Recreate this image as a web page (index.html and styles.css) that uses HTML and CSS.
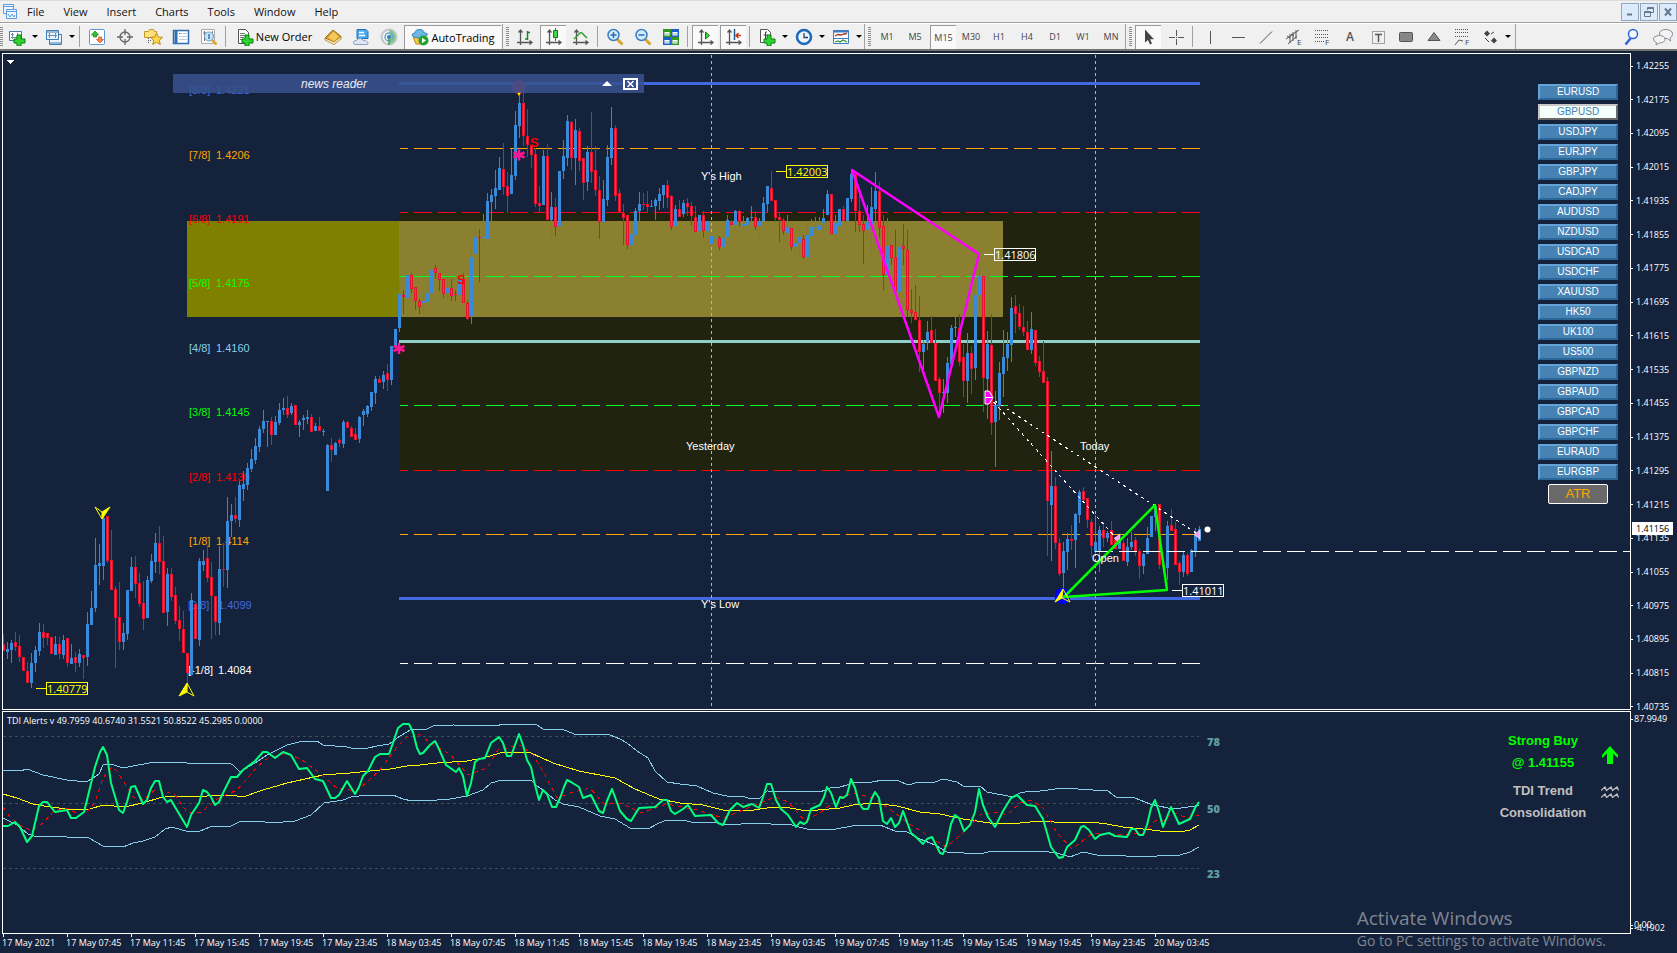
FILE: index.html
```html
<!doctype html>
<html lang="en">

<head>
    <meta charset="utf-8">
    <title>GBPUSD,M15</title>
    <link rel="stylesheet" href="styles.css">
</head>

<body>
    <nav class="menubar">
        <svg class="app-icon" width="16" height="16" viewBox="0 0 16 16" fill="#eef6ff" stroke="#5b9be0">
            <path d="M1.500 .5h10v9h-10z M1.500 2.500h10" />
            <path d="M4.500 5.500h10v9h-10z M4.500 7.500h10 M6 10l2 3 2-3 2 3 1-2" />
        </svg>
        <a href="#">File</a>
        <a href="#">View</a>
        <a href="#">Insert</a>
        <a href="#">Charts</a>
        <a href="#">Tools</a>
        <a href="#">Window</a>
        <a href="#">Help</a>
        <div class="window-buttons">
            <button aria-label="Minimize"><svg width="12" height="12"><path d="M3 8.500h5" stroke="#66788c" stroke-width="2" /></svg></button>
            <button aria-label="Restore"><svg width="12" height="12" fill="none" stroke="#66788c"><path d="M4.500 4V1.500h6v5H8 M4 2.500h7 M1.500 5.500h6v5h-6z M1 6.500h7" /></svg></button>
            <button aria-label="Close"><svg width="12" height="12"><path d="M3 2.500l6 7 M9 2.500l-6 7" stroke="#66788c" stroke-width="2" /></svg></button>
        </div>
    </nav>

    <div class="toolbar">
        <span class="grip first"></span>
        <button class="tool" aria-label="New chart">
            <svg width="18" height="18"><path d="M1.500 3.500h12v9h-12z" fill="#fff" stroke="#3f7fb5" /><path d="M4.500 5v6 M3 9.500h8 M9.500 5v5 M3 6.500h3" stroke="#6d8fa8" /><path d="M9 7h4v4h4v4h-4v3H9v-3H6v-4h3z" fill="#2fd52f" stroke="#0a7d12" /></svg>
        </button>
        <button class="drop" aria-label="New chart list"></button>
        <button class="tool" aria-label="Profiles">
            <svg width="18" height="18" fill="#e8f3fc" stroke="#3f7fb5"><path d="M4.500 6.500h12v10h-12z M4.500 15h12" /><path d="M1.500 2.500h12v9h-12z M1.500 4h12" /><path d="M4.500 5v5 M3 7.500h9 M10.500 5v5" stroke="#6d8fa8" /></svg>
        </button>
        <button class="drop" aria-label="Profiles list"></button>
        <span class="sep"></span>
        <button class="tool" aria-label="Market Watch">
            <svg width="18" height="18"><rect x="1.500" y="1.500" width="15" height="15" rx="1" fill="#fff" stroke="#5b9bd5" /><path d="M7 3l3.500 4H8.500v2h-3V7h-2z" fill="#2fc52f" stroke="#0a7d12" stroke-width=".7" /><path d="M12 15l-3.500-3.500h2V9h3v2.500h2z" fill="#ff8a50" stroke="#d0401a" stroke-width=".7" /></svg>
        </button>
        <button class="tool" aria-label="Data Window">
            <svg width="18" height="18" fill="none" stroke="#666" stroke-width="1.300"><circle cx="9" cy="9" r="5" /><path d="M9 1v6 M9 11v6 M1 9h6 M11 9h6" /></svg>
        </button>
        <button class="tool" aria-label="Navigator">
            <svg width="19" height="18"><path d="M.5 3.500h4l1-2h4l1 2h2v6H.5z" fill="#ffe07a" stroke="#c09a2a" /><path d="M4.500 10v6 M4 12.500h4" stroke="#555" stroke-dasharray="1 1" /><path d="M12.500 5l1.800 4 4.200.4-3.200 2.900 1 4.200-3.800-2.200-3.800 2.200 1-4.200-3.200-2.900 4.200-.4z" fill="#ffd84a" stroke="#b98a1d" /></svg>
        </button>
        <button class="tool" aria-label="Terminal">
            <svg width="18" height="18"><rect x="1.500" y="2.500" width="15" height="13" fill="#fff" stroke="#2f6fb0" stroke-width="1.500" /><path d="M4 3v12" stroke="#2f6fb0" stroke-width="3" /><path d="M7 5.500h8 M7 8.500h8 M7 11.500h8" stroke="#b9cfe6" /><path d="M7 5.500h1" stroke="red" /></svg>
        </button>
        <button class="tool" aria-label="Strategy Tester">
            <svg width="18" height="18"><path d="M1.500 1.500h13v14h-13z" fill="#fff" stroke="#aaa" /><path d="M4.500 3v10 M12.500 3v8 M3 5h3" stroke="#777" /><path d="M12 12l4.500 4.500" stroke="#e0a92d" stroke-width="2.500" /><circle cx="9" cy="8.500" r="4.500" fill="#bfe2fb" fill-opacity=".85" stroke="#6a9cc4" /><path d="M9 6v5" stroke="#5b8fc0" stroke-width="2" /></svg>
        </button>
        <span class="sep"></span>
        <button class="tool wide new-order">
            <svg width="18" height="18"><path d="M2.500 1.500h7l3 3v11h-10z" fill="#fff" stroke="#555" /><path d="M4 5.500h5 M4 7.500h6 M4 9.500h4 M4 11.500h3" stroke="#777" /><path d="M9 7h4v4h4v4h-4v3H9v-3H6v-4h3z" fill="#2fd52f" stroke="#0a7d12" /></svg>
            New Order
        </button>
        <button class="tool" aria-label="MetaEditor">
            <svg width="18" height="18"><path d="M1 10l8-8 8 6.500-7 7.500z" fill="#d99a1f" stroke="#9a6a10" /><path d="M4 9.500l5.500-6 5.500 5-5 5z" fill="#f3c75c" /><path d="M1 10l9 4 7-5.500v2.500l-7 5.500-9-4.500z" fill="#fff2c4" stroke="#9a6a10" stroke-width=".7" /></svg>
        </button>
        <button class="tool" aria-label="Hosting">
            <svg width="18" height="18"><path d="M5 1.500h9l2 2v7H5z" fill="#4aa8ee" stroke="#2070c0" /><path d="M7 4.500h5 M7 7.500h6" stroke="#fff" stroke-width="1.500" /><path d="M3 16.500q-2-.5-1.500-2.500 1-2 3-1.500 1-2.500 4-2 2 .3 2.500 2 2.500-1 3.500 1 2 .5 1.500 2.500l-1 .5z" fill="#dfe6f2" stroke="#8aa0c0" /></svg>
        </button>
        <button class="tool" aria-label="Signals">
            <svg width="18" height="18" fill="none"><circle cx="9" cy="9" r="7.500" stroke="#c3c8cc" stroke-width="2" /><path d="M9 1.500a7.500 7.500 0 0 1 1 14.800V9z" fill="#86c88a" /><circle cx="9" cy="9" r="4" stroke="#6fa7cf" stroke-width="1.500" /><circle cx="9" cy="9" r="2" fill="#2f80c0" /><path d="M9 10v7" stroke="#3c9a46" stroke-width="1.500" /></svg>
        </button>
        <button class="tool wide auto pressed">
            <svg width="18" height="18"><path d="M2 9h13l-4 7H5z" fill="#f6c945" stroke="#b58a18" /><path d="M1 7.500q0-2.500 3-2.500 0-3.500 4.500-3.500T13 5q3.500-.5 3.500 2-3 3-8 3t-7.500-2.500z" fill="#6bb7e4" stroke="#3a86ba" /><circle cx="12.500" cy="12.500" r="5" fill="#1fa32a" /><path d="M11 9.800v5.400l4-2.700z" fill="#fff" /></svg>
            AutoTrading
        </button>

        <span class="grip"></span>
        <button class="tool" aria-label="Bar chart">
            <svg width="18" height="18" fill="none"><path class="axes" d="M4.500 2v15 M1 14.500h15 M2.500 4.500l2-2.500 2 2.500 M13.500 12.500l2.500 2-2.500 2" /><path d="M11.500 3v9 M11.500 4.500h2.500 M9 11h2.500" stroke="#178a22" stroke-width="1.500" /></svg>
        </button>
        <button class="tool pressed" aria-label="Candlesticks">
            <svg width="18" height="18" fill="none"><path class="axes" d="M4.500 2v15 M1 14.500h15 M2.500 4.500l2-2.500 2 2.500 M13.500 12.500l2.500 2-2.500 2" /><path d="M10.500 0v13" stroke="#178a22" /><path d="M8.500 2.500h4v7h-4z" fill="#3fd84a" stroke="#0a7d12" /></svg>
        </button>
        <button class="tool" aria-label="Line chart">
            <svg width="18" height="18" fill="none"><path class="axes" d="M4.500 2v15 M1 14.500h15 M2.500 4.500l2-2.500 2 2.500 M13.500 12.500l2.500 2-2.500 2" /><path d="M2 11l6-6q2-1 3 1l4 4" stroke="#2fa03a" stroke-width="1.500" /></svg>
        </button>
        <span class="sep"></span>
        <button class="tool" aria-label="Zoom in">
            <svg width="18" height="18"><path d="M11 11l5.500 5.500" stroke="#d7a62a" stroke-width="3" /><circle cx="7.500" cy="7" r="5.500" fill="#d3ecfd" stroke="#3b7fc4" stroke-width="1.500" /><path d="M4.500 7h6 M7.500 4v6" stroke="#2a68b0" stroke-width="1.500" /></svg>
        </button>
        <button class="tool" aria-label="Zoom out">
            <svg width="18" height="18"><path d="M11 11l5.500 5.500" stroke="#d7a62a" stroke-width="3" /><circle cx="7.500" cy="7" r="5.500" fill="#d3ecfd" stroke="#3b7fc4" stroke-width="1.500" /><path d="M4.500 7h6" stroke="#2a68b0" stroke-width="1.500" /></svg>
        </button>
        <button class="tool" aria-label="Tile windows">
            <svg width="18" height="18"><path fill="#2f9a1f" d="M1 1h8v8H1z M9 9h8v8H9z" /><path fill="#1d5fc8" d="M9 1h8v8H9z M1 9h8v8H1z" /><path fill="#fff" d="M2.500 4h5v3.500h-5z M10.500 4h5v3.500h-5z M2.500 12h5v3.500h-5z M10.500 12h5v3.500h-5z" /><path d="M3 6h4 M11 6h4 M3 14h4 M11 14h4" stroke="#9ab" /></svg>
        </button>
        <span class="sep"></span>
        <button class="tool pressed" aria-label="Auto scroll">
            <svg width="18" height="18" fill="none"><path class="axes" d="M4.500 2v15 M1 14.500h15 M2.500 4.500l2-2.500 2 2.500 M13.500 12.500l2.500 2-2.500 2" /><path d="M8.500 4v7l4-3.500z" fill="#3fd84a" stroke="#0a7d12" /></svg>
        </button>
        <button class="tool pressed" aria-label="Chart shift">
            <svg width="18" height="18" fill="none"><path class="axes" d="M4.500 2v15 M1 14.500h15 M2.500 4.500l2-2.500 2 2.500 M13.500 12.500l2.500 2-2.500 2" /><path d="M9.500 1v11" stroke="#1d5a90" stroke-width="1.500" /><path d="M11 7.500h5 M13.500 5l-2.500 2.500 2.500 2.500" stroke="#c23a12" stroke-width="1.500" /></svg>
        </button>
        <span class="sep"></span>
        <button class="tool" aria-label="Indicators">
            <svg width="18" height="18"><path d="M2.500 1.500h7l3 3v10h-10z" fill="#fff" stroke="#555" /><path d="M9 4H7.500v8H6 M5.500 7h4" fill="none" stroke="#444" /><path d="M9 7h4v4h4v4h-4v3H9v-3H6v-4h3z" fill="#2fd52f" stroke="#0a7d12" /></svg>
        </button>
        <button class="drop" aria-label="Indicators list"></button>
        <button class="tool" aria-label="Periods">
            <svg width="18" height="18"><circle cx="9" cy="9" r="7" fill="#eaf5ff" stroke="#1c68b8" stroke-width="2.500" /><path d="M9 5v4.500h4" fill="none" stroke="#345" stroke-width="1.300" /></svg>
        </button>
        <button class="drop" aria-label="Periods list"></button>
        <button class="tool" aria-label="Templates">
            <svg width="18" height="18" fill="none"><path d="M1.500 2.500h15v13h-15z" fill="#fff" stroke="#3f7fc0" /><path d="M1 3.500h16" stroke="#3f7fc0" stroke-width="2" /><path d="M1 10.500h16" stroke="#3f7fc0" /><path d="M3 8l3-1.500 3 .5 3-1 3-.5" stroke="#a03020" stroke-width="1.300" /><path d="M3 14l3-1 2 1 3-2 4 2" stroke="#2f9a3a" stroke-width="1.300" /></svg>
        </button>
        <button class="drop" aria-label="Templates list"></button>

        <span class="grip"></span>
        <button class="tool">M1</button>
        <button class="tool">M5</button>
        <button class="tool pressed">M15</button>
        <button class="tool">M30</button>
        <button class="tool">H1</button>
        <button class="tool">H4</button>
        <button class="tool">D1</button>
        <button class="tool">W1</button>
        <button class="tool">MN</button>

        <span class="grip"></span>
        <button class="tool pressed" aria-label="Cursor">
            <svg width="18" height="18"><path d="M5 1.500v13l3-2.500 2 4.500 2-1-2-4.300h4z" fill="#444" /></svg>
        </button>
        <button class="tool" aria-label="Crosshair">
            <svg width="18" height="18" class="glyph"><path d="M9.500 2v6 M9.500 11v6 M2 9.500h6 M11 9.500h6 M9 9.500h1" /></svg>
        </button>
        <span class="sep"></span>
        <button class="tool" aria-label="Vertical line">
            <svg width="18" height="18" class="glyph"><path d="M9.500 3v13" /></svg>
        </button>
        <button class="tool" aria-label="Horizontal line">
            <svg width="18" height="18" class="glyph"><path d="M3 9.500h13" /></svg>
        </button>
        <button class="tool" aria-label="Trendline">
            <svg width="18" height="18" class="glyph"><path d="M3 15.500l12-12" /></svg>
        </button>
        <button class="tool" aria-label="Equidistant channel">
            <svg width="18" height="18" class="glyph"><path d="M1 11l13-9 M3 16l9-8 M5 6v9 M8 4v9 M11 2v9 M2 8l3 2 M6 6l3 2" /><text x="12" y="17">E</text></svg>
        </button>
        <button class="tool" aria-label="Fibonacci retracement">
            <svg width="18" height="18" class="glyph"><path stroke-dasharray="1 1" d="M2 2.500h14 M2 6.500h14 M2 9.500h14 M2 13.500h9" /><text x="12" y="17">F</text></svg>
        </button>
        <button class="tool letter">A</button>
        <button class="tool" aria-label="Text label">
            <svg width="18" height="18" class="glyph"><path stroke-dasharray="1 1" d="M3.500 3.500h12v12h-12z" /><path d="M6 6.500h7 M9.500 6v8" stroke-width="1.500" /></svg>
        </button>
        <button class="tool" aria-label="Rectangle">
            <svg width="18" height="18" class="glyph"><rect x="2.500" y="4.500" width="13" height="9" rx="1" fill="#888" /></svg>
        </button>
        <button class="tool" aria-label="Triangle">
            <svg width="18" height="18" class="glyph"><path d="M9 4.500l6 8H3z" fill="#888" /></svg>
        </button>
        <button class="tool" aria-label="Fibonacci expansion">
            <svg width="18" height="18" class="glyph"><path stroke-dasharray="1 1" d="M2 1.500h14 M2 4.500h14 M2 8.500h14" /><path d="M2 17l4-5 4 1" /><text x="12" y="17">F</text></svg>
        </button>
        <button class="tool" aria-label="Arrows">
            <svg width="18" height="18"><path d="M6 2.500l3 3-3 3-3-3z M13 9.500l3 3-3 3-3-3z" fill="#444" /><path d="M4 10l4 4 M10 6l3-2" stroke="#444" fill="none" /></svg>
        </button>
        <button class="drop" aria-label="Arrows list"></button>
        <span class="end"></span>

        <div class="toolbar-right">
            <button class="tool" aria-label="Search">
                <svg width="18" height="18" fill="none" stroke="#2d62d8"><path d="M7.500 10.500l-5 6" stroke-width="2.500" /><circle cx="10" cy="6" r="4.500" stroke-width="1.500" fill="#f6faff" /></svg>
            </button>
            <button class="tool" aria-label="Chat">
                <svg width="22" height="18" fill="#f4f4f6" stroke="#8c8c94"><path d="M14 1.500q6.500.5 6.500 4.500 0 3-2.500 4l.5 3-3-2.500q-8 0-8-4.500 0-4.500 6.500-4.500z" /><path d="M7.500 7.500q5.500.3 5.500 3.700T7.500 15l-3.500 2 .5-2.500q-3-.7-3-3.500t6-3.500z" /></svg>
            </button>
        </div>
    </div>

    <main class="workspace">
        <section class="plot price-plot">
            <svg class="canvas" shape-rendering="crispEdges">
                <g transform="translate(-3 -54)">
                    <!-- zones -->
                    <rect x="399" y="212" width="801" height="258" fill="#1f230f" />
                    <rect x="187" y="221" width="212" height="96" fill="#808000" />
                    <rect x="399" y="221" width="604" height="96" fill="#8b8030" />

                    <!-- murrey levels -->
                    <g class="solid">
                        <path d="M399 83.500H1200" stroke="#4169e1" />
                        <path d="M399 341.500H1200" stroke="#8fcfc9" />
                        <path d="M399 598.500H1200" stroke="#4169e1" />
                    </g>
                    <g class="dashed">
                        <path d="M400 148.500H1200" stroke="#ffa500" />
                        <path d="M400 212.500H1200" stroke="#ff0022" />
                        <path d="M400 276.500H1200" stroke="#00ff22" />
                        <path d="M400 405.500H1200" stroke="#00ff22" />
                        <path d="M400 470.500H1200" stroke="#ff0000" />
                        <path d="M400 534.500H1200" stroke="#ffa500" />
                        <path d="M400 663.500H1200" stroke="#ffffff" />
                    </g>
                    <g class="level-text">
                        <text x="189" y="94" fill="#4169e1">[8/8]</text><text x="216" y="94" fill="#4169e1">1.4221</text>
                        <text x="189" y="159" fill="#ffa500">[7/8]</text><text x="216" y="159" fill="#ffa500">1.4206</text>
                        <text x="189" y="223" fill="#ff0000">[6/8]</text><text x="216" y="223" fill="#ff0000">1.4191</text>
                        <text x="189" y="287" fill="#00ff00">[5/8]</text><text x="216" y="287" fill="#00ff00">1.4175</text>
                        <text x="189" y="352" fill="#87ceeb">[4/8]</text><text x="216" y="352" fill="#87ceeb">1.4160</text>
                        <text x="189" y="416" fill="#00ff00">[3/8]</text><text x="216" y="416" fill="#00ff00">1.4145</text>
                        <text x="189" y="481" fill="#ff0000">[2/8]</text><text x="216" y="481" fill="#ff0000">1.4130</text>
                        <text x="189" y="545" fill="#ffa500">[1/8]</text><text x="216" y="545" fill="#ffa500">1.4114</text>
                        <text x="188" y="609" fill="#4169e1">[0/8]</text><text x="218" y="609" fill="#4169e1">1.4099</text>
                        <text x="188" y="674" fill="#ffffff">[-1/8]</text><text x="218" y="674" fill="#ffffff">1.4084</text>
                    </g>

                    <!-- day separators -->
                    <path class="day" d="M711.500 55V709 M1095.500 55V709" />

                    <g id="candles"></g>

                    <path d="M1095 551.500H1632" stroke="#fff" stroke-dasharray="18 6" />

                    <!-- closed trades -->
                    <path class="trade" d="M989 397L1116 538 M989 397L1196 533" />
                    <g shape-rendering="auto">
                        <path class="pattern" d="M852 170L979 254 939 417z" stroke="#ff00ff" />
                        <path d="M985 391h4l4 6.500-4 6.500h-4z" fill="#ff00ff" stroke="#fff" />
                        <path d="M985 397.500h7" stroke="#fff" />
                        <path d="M1120 534v9l-6-4.500z M1200 530v9l-6-4.500z" fill="#ff9df5" stroke="#fff" stroke-width=".5" />
                        <circle cx="1207.500" cy="529.500" r="3" fill="#fff" />
                        <circle cx="1062.500" cy="596" r="8" fill="#0000ff" />
                        <path class="pattern" d="M1064 597L1155 505 1167 590z" stroke="#00ff00" />
                        <g class="arrow">
                            <path d="M1063 589l-8 13 7-4z" fill="#ff0" /><path d="M1063 589l7 13-8-4" />
                            <path d="M187 683l-8 13 8-4z" fill="#ff0" /><path d="M187 683l7 13-7-4" />
                            <path d="M102 519l8-12-8 5z" fill="#ff0" /><path d="M102 519l-7-12 7 5" />
                        </g>
                        <circle cx="519" cy="87" r="7" fill="#c0204a" />
                        <path d="M515 91h8l-4 5z" fill="#f00" />
                        <path d="M517 92h4l-2 4z" fill="#ff0" />
                        <path class="star" d="M399 343v11 M393.500 346l11 5 M404.500 346l-11 5" />
                        <path class="star" d="M519 149.500v11 M513.500 152.500l11 5 M524.500 152.500l-11 5" />
                    </g>
                    <text class="sell" x="530" y="147">S</text>
                    <text class="sell" x="457" y="284">S</text>

                    <g class="chart-text">
                        <text x="701" y="180">Y's High</text>
                        <text x="686" y="450">Yesterday</text>
                        <text x="1080" y="450">Today</text>
                        <text x="1092" y="562">Open</text>
                        <text x="701" y="608">Y's Low</text>
                    </g>

                    <!-- price tags -->
                    <g class="tag yellow">
                        <path d="M36 688.500h10 M46.500 682.500h41v12h-41z" /><text x="47" y="693">1.40779</text>
                        <path d="M776 171.500h10 M786.500 165.500h41v12h-41z" /><text x="787" y="176">1.42003</text>
                    </g>
                    <g class="tag">
                        <path d="M984 254.500h10 M994.500 248.500h41v12h-41z" /><text x="995" y="259">1.41806</text>
                        <path d="M1172 590.500h10 M1182.500 584.500h41v12h-41z" /><text x="1183" y="595">1.41011</text>
                    </g>
                    <path d="M6 60h8l-4 4z" fill="#fff" />
                </g>
            </svg>

            <div class="news-reader">
                <span class="news-title">news reader</span>
                <button aria-label="Collapse"><svg width="10" height="5"><path d="M0 5l5-5 5 5z" fill="#fff" /></svg></button>
                <button aria-label="Close"><svg width="15" height="12" fill="none" stroke="#fff"><path d="M1 1h13v10H1z" stroke-width="2" /><path d="M4.500 3l6 6 M10.500 3l-6 6" stroke-width="1.500" /></svg></button>
            </div>

            <div class="symbols">
                <button>EURUSD</button>
                <button class="active">GBPUSD</button>
                <button>USDJPY</button>
                <button>EURJPY</button>
                <button>GBPJPY</button>
                <button>CADJPY</button>
                <button>AUDUSD</button>
                <button>NZDUSD</button>
                <button>USDCAD</button>
                <button>USDCHF</button>
                <button>XAUUSD</button>
                <button>HK50</button>
                <button>UK100</button>
                <button>US500</button>
                <button>GBPNZD</button>
                <button>GBPAUD</button>
                <button>GBPCAD</button>
                <button>GBPCHF</button>
                <button>EURAUD</button>
                <button>EURGBP</button>
                <button class="atr">ATR</button>
            </div>
        </section>

        <div class="axis price-axis">
            <span>1.42255</span>
            <span>1.42175</span>
            <span>1.42095</span>
            <span>1.42015</span>
            <span>1.41935</span>
            <span>1.41855</span>
            <span>1.41775</span>
            <span>1.41695</span>
            <span>1.41615</span>
            <span>1.41535</span>
            <span>1.41455</span>
            <span>1.41375</span>
            <span>1.41295</span>
            <span>1.41215</span>
            <span>1.41135</span>
            <span>1.41055</span>
            <span>1.40975</span>
            <span>1.40895</span>
            <span>1.40815</span>
            <span>1.40735</span>
            <b class="bid">1.41156</b>
        </div>

        <section class="plot tdi-plot">
            <svg class="canvas" shape-rendering="crispEdges" fill="none">
                <g transform="translate(-3 -712)">
                    <path d="M3 736.500H1199 M3 803.500H1199 M3 868.500H1199" stroke="#38534f" stroke-dasharray="3 3" />
                    <polyline class="band" points="3,770 20,771 27,769 43,775 67,780 86,782 93,778 99,774 103,765 111,764 123,768 133,766 155,762 187,763 229,763 233,765 240,772 255,763 267,755 287,745 303,741 317,741 323,745 347,747 351,748 368,748 377,746 389,744 400,736 412,729 427,729 433,726 453,725 497,726 502,724 528,724 537,725 543,729 562,729 574,734 610,735 620,739 627,743 637,751 648,758 655,771 667,782 680,784 697,786 713,793 727,796 742,796 748,798 760,798 767,791 820,792 830,788 840,787 847,785 853,782 872,782 883,780 899,781 908,785 919,782 935,782 943,779 957,782 963,786 975,787 980,786 987,792 1013,797 1020,793 1030,791 1040,791 1063,788 1108,791 1116,797 1135,798 1150,804 1159,806 1168,808 1181,808 1195,806 1199,805" />
                    <polyline class="band" points="3,818 17,825 28,834 34,836 67,837 89,838 103,846 123,847 133,843 143,841 155,837 165,829 172,827 189,832 200,831 210,827 231,826 239,822 259,821 271,823 295,821 311,815 324,803 337,801 343,800 351,797 367,795 393,795 403,799 412,801 437,800 450,799 467,796 483,790 491,783 502,780 531,780 537,786 543,790 555,800 563,804 579,807 600,816 615,819 630,828 648,829 659,823 667,820 687,821 695,823 715,822 723,825 760,823 771,824 788,824 807,829 830,830 847,827 858,825 880,825 895,831 907,832 920,839 935,845 947,852 980,854 988,852 1011,851 1040,851 1057,853 1070,857 1083,852 1097,855 1115,855 1137,857 1157,856 1180,855 1190,852 1199,847" />
                    <polyline class="base" points="3,794 17,798 33,804 50,807 67,809 87,810 103,805 124,807 143,803 159,798 171,796 187,797 207,796 230,795 243,797 263,790 287,783 323,775 350,773 370,771 390,769 407,766 420,765 437,763 467,761 483,758 500,753 518,752 531,753 553,763 579,771 615,778 635,789 659,799 680,803 703,805 723,810 748,811 773,807 790,808 807,811 840,808 853,805 873,803 897,806 920,812 940,814 963,819 990,823 1010,824 1040,821 1067,823 1090,822 1107,824 1123,827 1143,829 1160,831 1180,832 1190,830 1199,825" />
                    <polyline class="signal" points="3,807 10,817 20,825 32,831 43,823 55,810 67,808 80,815 87,812 95,802 103,778 112,767 117,771 127,787 133,797 143,800 156,789 167,792 175,795 187,812 200,813 217,799 237,790 257,767 268,758 287,753 302,760 317,771 337,788 357,791 380,770 397,747 412,732 420,735 433,745 450,754 468,775 487,768 498,750 520,745 533,755 545,775 557,798 570,793 590,788 603,803 620,803 642,813 667,804 697,810 723,818 753,806 775,797 788,802 805,821 820,813 840,797 853,793 873,798 887,807 908,823 930,837 946,847 963,833 980,815 997,812 1007,815 1020,803 1032,800 1043,808 1057,833 1072,849 1093,833 1120,835 1145,833 1155,821 1165,820 1173,812 1187,818 1199,815" />
                    <polyline class="rsi" points="3,826 8,826 15,822 20,827 27,842 32,836 39,806 43,802 47,802 55,812 67,810 71,818 76,818 84,812 87,800 95,767 100,752 103,747 107,755 111,783 119,810 123,813 127,802 131,787 135,786 139,795 143,804 147,800 151,788 155,781 159,781 163,797 167,802 171,800 175,807 187,827 191,815 199,803 203,790 207,792 211,797 215,805 219,802 223,793 231,777 237,777 243,770 255,761 263,752 267,752 275,758 283,752 291,755 299,769 307,768 315,779 323,781 331,798 335,798 339,795 347,781 355,794 359,787 363,776 368,771 375,757 380,754 389,754 393,743 398,728 403,724 409,724 413,732 417,748 420,754 423,753 430,745 435,741 439,749 446,765 456,772 459,768 463,776 467,796 471,783 475,762 479,759 485,758 491,743 499,737 503,743 507,756 511,756 515,745 519,734 523,745 527,760 531,767 535,785 539,800 543,790 547,794 552,807 556,807 560,798 564,787 567,780 571,782 579,787 583,798 591,795 599,811 603,813 607,801 612,789 615,797 620,811 627,819 631,821 639,808 655,807 663,800 667,800 671,811 675,814 683,809 688,805 695,816 711,815 718,823 723,825 730,810 737,803 743,807 752,804 759,808 763,797 767,784 771,784 776,800 781,809 788,815 796,827 800,822 804,824 807,822 811,809 820,805 824,797 827,787 831,793 836,807 840,797 843,798 847,795 851,779 855,788 859,803 863,809 868,809 872,798 875,792 879,798 883,821 887,824 891,818 895,827 899,823 903,811 911,833 916,837 923,844 927,839 932,837 937,847 940,853 943,854 947,843 951,824 955,815 959,818 964,831 970,825 975,812 979,789 983,805 988,817 995,827 1003,811 1011,798 1017,795 1027,805 1035,806 1043,819 1047,833 1051,847 1059,858 1063,857 1067,847 1075,840 1081,827 1084,826 1089,830 1095,839 1100,835 1109,833 1115,836 1127,837 1131,829 1135,829 1139,835 1143,835 1147,825 1151,808 1155,800 1159,812 1163,827 1167,817 1171,807 1179,824 1190,819 1195,808 1199,802" />
                    <g class="level-value">
                        <text x="1207" y="746">78</text>
                        <text x="1207" y="813">50</text>
                        <text x="1207" y="878">23</text>
                    </g>
                </g>
            </svg>
            <p class="tdi-title">TDI Alerts v 49.7959 40.6740 31.5521 50.8522 45.2985 0.0000</p>
            <div class="tdi-status">
                <div class="buy">Strong Buy<br>@ 1.41155</div>
                <svg class="up" width="16" height="18"><path d="M8 0l8 9v3l-5-4.500V18H5V7.500L0 12V9z" fill="#0f0" /></svg>
                <div class="trend">TDI Trend<br>Consolidation</div>
                <svg class="waves" width="18" height="12" fill="none" stroke="#c0c0c0" stroke-width="1.300"><path d="M0 4.500l4-3.500 1.500 3.500L10 1l1.500 3.500L16 1l1.500 3.500 M0 11.500L4 8l1.500 3.500L10 8l1.500 3.500L16 8l1.500 3.500" /></svg>
            </div>
        </section>

        <div class="axis tdi-axis">
            <span>87.9949</span>
            <span class="zero">0.00</span>
            <span class="min">-4.1902</span>
        </div>

        <div class="time-axis">
            <span>17 May 2021</span>
            <span>17 May 07:45</span>
            <span>17 May 11:45</span>
            <span>17 May 15:45</span>
            <span>17 May 19:45</span>
            <span>17 May 23:45</span>
            <span>18 May 03:45</span>
            <span>18 May 07:45</span>
            <span>18 May 11:45</span>
            <span>18 May 15:45</span>
            <span>18 May 19:45</span>
            <span>18 May 23:45</span>
            <span>19 May 03:45</span>
            <span>19 May 07:45</span>
            <span>19 May 11:45</span>
            <span>19 May 15:45</span>
            <span>19 May 19:45</span>
            <span>19 May 23:45</span>
            <span>20 May 03:45</span>
        </div>

        <div class="activate">
            <p class="activate-title">Activate Windows</p>
            <p>Go to PC settings to activate Windows.</p>
        </div>
    </main>

    <script src="candles.js"></script>
</body>

</html>
```

FILE: styles.css
```css
* {
    box-sizing: border-box;
}

body {
    margin: 0;
    height: 100vh;
    display: flex;
    flex-direction: column;
    overflow: hidden;
    background: #15223b;
    font-family: "Open Sans", "Noto Sans", sans-serif;
    font-size: 11px;
    color: #000;
}

button {
    font: inherit;
    color: inherit;
    padding: 0;
    margin: 0;
    border: 0;
    background: none;
}

p {
    margin: 0;
}

/* menu */
.menubar {
    display: flex;
    align-items: center;
    height: 23px;
    padding-left: 2px;
    background: #f0f0f0;
    border-top: 1px solid #dcdcdc;
    border-bottom: 1px solid #a0a0a0;
}

.menubar a {
    padding: 0 9px 0 10px;
    line-height: 20px;
    color: #111;
    text-decoration: none;
}

.app-icon {
    margin-right: -1px;
}

.window-buttons {
    display: flex;
    gap: 1px;
    margin-left: auto;
}

.window-buttons button {
    display: flex;
    align-items: center;
    justify-content: center;
    width: 18px;
    height: 18px;
    background: #dcebfb;
    border: 1px solid #94a6bb;
}

/* toolbar */
.toolbar {
    display: flex;
    align-items: center;
    height: 28px;
    background: #f0f0f0;
    border-top: 1px solid #fff;
    border-bottom: 2px solid #73736f;
}

.tool {
    display: flex;
    align-items: center;
    justify-content: center;
    flex: none;
    width: 26px;
    height: 24px;
    margin: 0 1px;
    font-size: 9px;
    color: #444;
}

.pressed {
    background: #f9f9f9;
    border-top: 1px solid #999;
    border-left: 1px solid #999;
}

.wide {
    gap: 2px;
    font-size: 11px;
    color: #000;
}

.new-order {
    width: 88px;
}

.auto {
    width: 97px;
}

.letter {
    font-size: 12px;
    font-weight: 600;
    color: #555;
}

.drop {
    display: flex;
    align-items: center;
    flex: none;
    width: 9px;
    height: 24px;
}

.drop::before {
    content: "";
    width: 0;
    margin-left: 1px;
    border: 3px solid transparent;
    border-top-color: #000;
    border-bottom: 0;
}

.sep {
    flex: none;
    width: 1px;
    height: 21px;
    margin: 0 3px 0 2px;
    background: #a0a0a0;
}

.grip {
    flex: none;
    width: 9px;
    height: 25px;
    border-left: 1px solid #a0a0a0;
    background: repeating-linear-gradient(#8c8c8c 0 1px, #f0f0f0 1px 2px) 3px 3px / 3px 19px no-repeat;
}

.grip.first {
    width: 3px;
    border-left: 0;
    background-position: 0 3px;
}

.end {
    width: 1px;
    height: 25px;
    margin-left: 2px;
    background: #a0a0a0;
}

.toolbar-right {
    display: flex;
    gap: 3px;
    margin-left: auto;
}

.axes {
    stroke: #555;
    stroke-width: 1.3px;
}

.glyph {
    overflow: visible;
    fill: none;
    stroke: #555;
}

.glyph text {
    fill: #444;
    stroke: none;
    font-size: 8px;
}

/* charts */
.workspace {
    position: relative;
    flex: 1;
    min-height: 0;
    display: grid;
    grid-template-columns: 1fr 46px;
    grid-template-rows: 657fr 223fr 18px;
    row-gap: 1px;
    padding: 2px 0 0 2px;
    color: #fff;
    font-size: 9px;
}

.plot {
    position: relative;
    min-height: 0;
    border: 1px solid #fff;
}

.canvas {
    display: block;
    width: 100%;
    height: 100%;
}

.solid {
    stroke-width: 3px;
}

.dashed {
    stroke-dasharray: 18 6;
    stroke-dashoffset: 10px;
}

.level-text,
.chart-text {
    font-family: "Liberation Sans", sans-serif;
    font-size: 11px;
}

.chart-text {
    fill: #fff;
}

.day {
    stroke: #b4b4b4;
    stroke-dasharray: 3 3;
}

.wick-up {
    stroke: #4682b4;
}

.wick-down {
    stroke: #dc143c;
}

.body-up {
    fill: #398ad9;
}

.body-down {
    fill: #e8142f;
}

.core-down {
    fill: #ff3a2a;
}

.trade {
    stroke: #fff;
    stroke-dasharray: 3 4;
}

.pattern {
    fill: none;
    stroke-width: 2.5px;
    stroke-linejoin: round;
}

.arrow {
    fill: none;
    stroke: #ff0;
    stroke-width: 1px;
}

.star {
    stroke: #ff1493;
    stroke-width: 2.5px;
}

.sell {
    fill: #f00;
    font: bold 13px "Liberation Sans", sans-serif;
}

.tag {
    fill: none;
    stroke: #fff;
    font-size: 11px;
}

.tag text {
    fill: #fff;
    stroke: none;
}

.yellow {
    stroke: #ff0;
}

.yellow text {
    fill: #ff0;
}

/* news panel */
.news-reader {
    position: absolute;
    top: 20px;
    left: 170px;
    display: flex;
    align-items: center;
    width: 471px;
    height: 19px;
    padding-right: 6px;
    background: rgba(56, 83, 142, .86);
}

.news-title {
    flex: 1;
    padding-left: 128px;
    font: italic 12px "Liberation Sans", sans-serif;
    color: #e8ecf4;
}

.news-reader button {
    display: flex;
    margin-left: 11px;
}

/* symbol switcher */
.symbols {
    position: absolute;
    top: 30px;
    right: 12px;
    display: flex;
    flex-direction: column;
    gap: 4px;
    width: 80px;
    font: 10px "Liberation Sans", sans-serif;
}

.symbols button {
    height: 16px;
    line-height: 12px;
    background: #4682b4;
    border: 2px solid;
    border-color: #64a3d6 #2b6796 #2b6796 #64a3d6;
    color: #fff;
}

.symbols .active {
    background: #f5fffa;
    border-color: #c8c8c8 #696969 #696969 #c8c8c8;
    color: #4682b4;
}

.symbols .atr {
    width: 60px;
    height: 20px;
    align-self: center;
    background: #696969;
    border: 1px solid #fff;
    border-radius: 2px;
    color: #ffa500;
    font-size: 13px;
    line-height: 18px;
}

/* axes */
.axis {
    position: relative;
    display: flex;
    flex-direction: column;
    justify-content: space-between;
    line-height: 12px;
}

.axis span {
    display: flex;
    align-items: center;
    gap: 3px;
}

.axis span::before {
    content: "";
    width: 2px;
    height: 1px;
    background: #fff;
}

.price-axis {
    padding-top: 7px;
    margin-bottom: -3px;
}

.bid {
    position: absolute;
    top: 71%;
    left: 1px;
    width: 41px;
    padding: 1px 0 0 4px;
    background: #fff;
    color: #000;
    font-weight: 400;
}

.tdi-axis {
    padding-top: 2px;
}

.tdi-axis span {
    gap: 1px;
}

.tdi-axis .zero {
    margin: auto 0 -9px;
}

.time-axis {
    grid-column: 1 / -1;
    display: flex;
    margin-top: -1px;
}

.time-axis span {
    position: relative;
    flex: none;
    width: 64px;
    padding-top: 3px;
    line-height: 12px;
    white-space: nowrap;
}

.time-axis span::before {
    content: "";
    position: absolute;
    top: 0;
    left: 1px;
    width: 1px;
    height: 3px;
    background: #fff;
}

/* tdi window */
.band {
    stroke: #87ceeb;
}

.base {
    stroke: #ff0;
}

.signal {
    stroke: #f00;
    stroke-dasharray: 4 4;
}

.rsi {
    stroke: #00ff7f;
    stroke-width: 2px;
    stroke-linejoin: round;
    shape-rendering: auto;
}

.level-value {
    fill: #5f9ea0;
    font-size: 11px;
    font-weight: 800;
}

.tdi-title {
    position: absolute;
    top: 2px;
    left: 4px;
    line-height: 14px;
}

.tdi-status {
    position: absolute;
    top: 18px;
    right: 11px;
    display: grid;
    grid-template-columns: 90px 18px;
    column-gap: 13px;
    row-gap: 6px;
    align-items: center;
    justify-items: center;
    text-align: center;
    font: bold 13px/22px "Liberation Sans", sans-serif;
}

.buy {
    color: #0f0;
}

.trend {
    color: #c0c0c0;
}

.up {
    margin-top: 6px;
}

.waves {
    align-self: start;
    margin-top: 6px;
}

.activate {
    position: absolute;
    right: 71px;
    bottom: 2px;
    font-size: 14px;
    line-height: 20px;
    color: #7f8691;
}

.activate-title {
    font-size: 19px;
    line-height: 26px;
}
```

FILE: candles.js
```js
// one bar per entry: high, body top, body bottom, low. Leading "-" = bearish
const bars = `
-634,644,651,651 642,649,652,659 640,643,650,663 -632,642,647,651 -635,646,657,662 -657,657,671,671 -662,671,683,683 653,663,683,688 646,650,663,672 623,632,651,656
-624,632,638,648 -633,633,638,645 -637,637,654,654 636,644,655,655 -637,644,654,659 635,640,655,659 -638,638,663,667 644,658,664,664 -652,657,663,672 649,654,663,667
-655,655,658,679 612,624,657,666 591,608,625,625 538,565,608,612 544,563,566,585 517,518,566,580 -516,516,561,563 -530,560,590,590 -586,589,618,668 -582,617,642,650
623,633,642,650 590,590,634,640 557,567,591,591 -556,567,584,598 -573,583,604,607 -581,603,619,630 576,580,618,618 554,561,581,583 533,543,562,573 -526,543,562,574
-536,561,613,613 568,574,612,626 -568,574,597,601 -587,595,621,624 -606,620,629,641 -611,629,653,653 -653,653,673,689 593,600,675,675 -604,604,639,639 558,561,640,646
550,561,565,571 -545,558,578,582 -562,577,596,639 -596,596,622,635 546,569,623,635 -543,569,570,587 497,521,570,588 504,515,521,537 -497,515,519,523 481,485,520,527
471,484,489,501 463,468,485,490 449,459,469,472 438,446,460,464 426,429,447,452 410,421,429,433 421,421,422,447 -417,421,435,445 416,422,435,435 403,410,423,425
398,408,410,415 -396,408,415,418 403,406,413,415 -405,405,425,425 420,422,425,437 415,418,420,430 410,417,419,424 -414,417,432,432 423,426,431,431 -417,426,431,431
429,431,432,436 444,445,491,491 -438,445,450,462 442,443,455,455 -438,440,443,447 420,422,444,448 -421,422,428,428 -426,428,437,437 -428,434,440,440 416,417,439,443
409,411,415,426 405,406,414,417 392,392,407,411 376,379,393,404 -376,379,383,383 371,375,382,389 -364,373,380,391 346,346,380,385 329,329,347,347 282,294,328,332
-290,295,297,314 271,275,298,298 -273,275,289,293 -287,287,301,310 -299,301,307,314 295,301,303,312 285,293,302,302 270,270,293,300 -265,268,273,279 -273,273,280,291
-279,279,294,298 278,288,293,301 -279,288,296,301 -290,294,295,301 275,279,295,295 -273,279,303,303 -300,303,319,320 243,257,316,324 227,237,254,254 -229,237,238,282
214,237,238,248 193,201,239,239 189,195,202,223 170,188,196,209 157,168,190,190 -143,169,187,195 -172,186,196,213 149,175,194,194 111,125,176,180 95,103,126,138
-93,103,136,146 -109,136,145,157 -145,145,155,168 -148,154,204,207 -186,203,206,212 150,156,205,205 -144,156,220,220 192,207,220,244 -198,207,227,236 171,171,226,226
140,156,171,179 115,121,158,166 -121,122,158,170 119,130,158,185 -128,131,161,171 -158,158,183,200 146,152,182,191 -112,152,172,183 -146,170,190,196 -176,190,222,239
180,199,222,228 145,157,200,206 107,128,158,165 -125,128,196,201 -189,193,212,212 -204,213,218,245 -215,215,245,249 223,234,245,253 208,211,235,245 192,204,211,228
-193,204,205,210 -191,204,207,212 200,206,207,207 198,200,206,220 188,194,201,210 185,185,195,208 -180,185,198,208 -195,196,227,230 205,209,226,233 -200,209,217,217
200,203,214,217 -198,203,207,216 -202,206,216,226 -206,217,232,232 215,215,231,231 -211,215,231,238 221,221,231,245 232,236,244,244 238,238,239,242 -236,238,247,250
230,238,247,247 215,220,237,237 -220,222,225,225 210,211,225,225 -210,211,222,226 216,224,226,229 217,218,225,225 206,217,218,223 -211,217,227,230 218,221,226,242
197,203,221,226 186,186,204,212 -171,188,201,201 -200,200,218,222 -212,217,220,242 -218,220,231,235 215,227,233,235 -228,228,247,251 239,243,247,253 228,237,243,255
-235,239,257,259 224,235,257,259 219,227,236,238 217,227,228,233 217,225,230,232 209,218,223,232 190,194,215,215 -194,194,234,234 215,223,234,241 209,209,226,232
-206,209,221,221 198,198,221,221 169,174,199,202 -174,174,211,232 -194,211,225,232 -215,224,231,264 205,222,230,238 187,207,224,257 172,191,209,230 -182,191,228,238
-215,226,275,290 218,246,275,275 -245,245,258,265 -230,257,291,291 247,247,292,297 -224,246,249,265 -230,250,310,317 -289,310,313,323 -285,312,320,320 -296,320,352,372
340,344,352,369 321,332,342,350 -316,330,343,343 -329,343,381,381 -377,379,393,413 379,392,393,413 357,363,393,403 325,328,364,364 313,327,328,337 -314,328,362,366
-344,357,381,397 333,353,381,403 -346,353,369,394 280,295,368,380 254,276,295,313 -276,276,378,412 331,344,379,419 -314,345,423,435 391,405,422,467 362,373,406,420
330,357,374,397 332,344,358,371 297,308,345,362 -295,306,314,333 -304,313,327,330 -306,327,332,336 -321,332,350,350 312,329,350,354 -330,330,363,366 -356,361,372,377
-341,371,383,383 -377,381,501,556 451,486,505,561 -477,486,543,549 -538,543,574,576 542,551,573,590 533,539,552,570 -525,539,541,550 513,514,540,568 490,492,515,523
-487,491,500,503 -498,498,520,528 -519,522,546,557 515,542,552,555 526,530,552,572 -522,530,538,547 531,533,538,542 -521,530,545,545 -540,540,549,549 540,540,549,549
-540,543,561,561 538,547,562,566 532,542,547,550 -537,540,551,556 -549,551,566,579 553,554,566,574 527,538,554,554 516,516,537,537 505,506,517,531 -504,504,565,569
-560,565,567,573 521,526,568,580 -509,525,531,531 -522,529,565,565 -561,563,572,585 552,555,572,577 -553,555,574,576 549,550,572,572 528,535,552,557 526,529,541,541
`.trim().split(/\s+/);

const step = 4;
const paths = { 'wick-up': '', 'wick-down': '', 'body-up': '', 'body-down': '', 'core-down': '' };

bars.forEach((bar, i) => {
    const down = bar[0] === '-';
    const [high, top, bottom, low] = bar.replace('-', '').split(',').map(Number);
    const dir = down ? 'down' : 'up';
    const x = 3 + i * step;
    const h = Math.max(bottom - top, 1);

    paths['wick-' + dir] += `M${x + 0.5} ${high}V${low}`;
    paths['body-' + dir] += `M${x - 1} ${top}h3v${h}h-3z`;
    if (down && h > 2) {
        paths['core-down'] += `M${x} ${top + 1}h1v${h - 2}h-1z`;
    }
});

const group = document.getElementById('candles');
for (const name in paths) {
    const el = document.createElementNS('http://www.w3.org/2000/svg', 'path');
    el.setAttribute('class', name);
    el.setAttribute('d', paths[name]);
    group.appendChild(el);
}
```
